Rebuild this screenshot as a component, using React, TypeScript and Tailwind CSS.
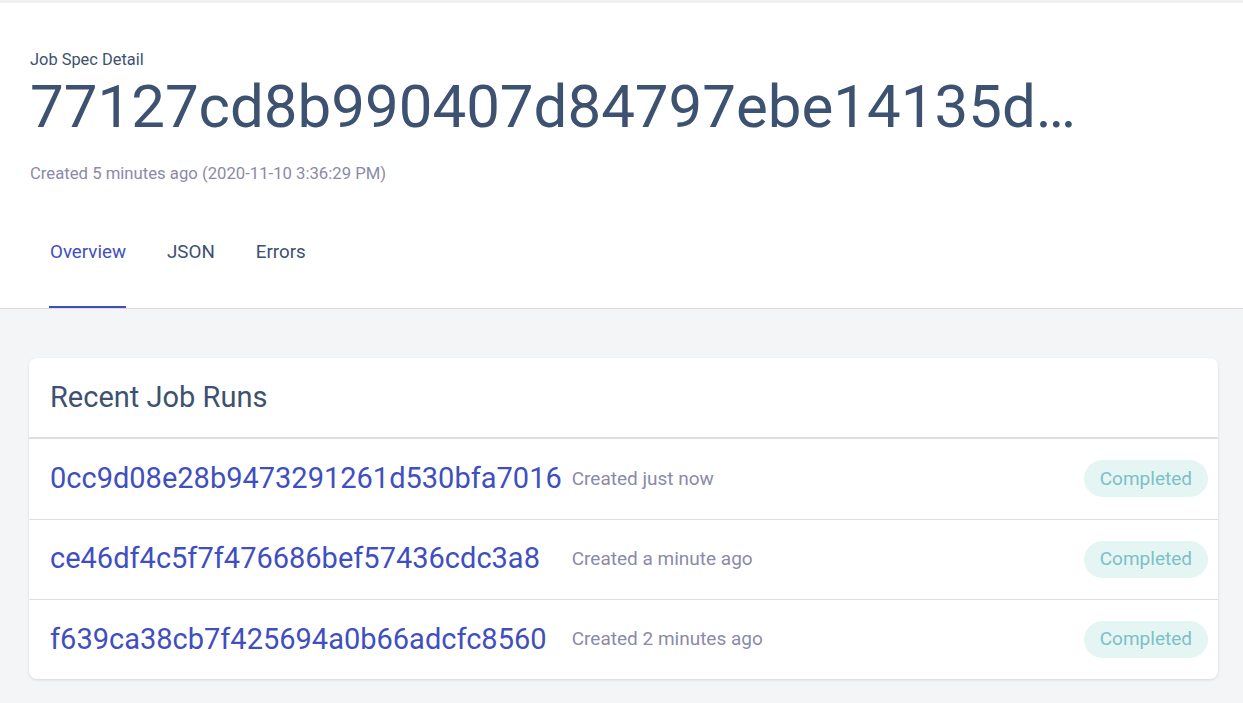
import React from "react";

const runs = [
  { id: "0cc9d08e28b9473291261d530bfa7016", created: "Created just now" },
  { id: "ce46df4c5f7f476686bef57436cdc3a8", created: "Created a minute ago" },
  { id: "f639ca38cb7f425694a0b66adcfc8560", created: "Created 2 minutes ago" },
];

export default function App() {
  return (
    <div
      className="min-h-[703px] w-full bg-[#f4f5f7]"
      style={{ fontFamily: "Roboto, 'Liberation Sans', sans-serif" }}
    >
      <div className="h-[3px] bg-[#f0f1f3]" />
      <div className="bg-white border-b border-[#dcdcdc]">
        <div className="pl-[30px] pt-[45px]">
          <div className="text-[16.4px] leading-[24px] text-[#3d5170]">Job Spec Detail</div>
          <div className="text-[60px] leading-[72px] text-[#3d5170] -mt-[1px]">
            77127cd8b990407d84797ebe14135d…
          </div>
          <div className="mt-[19px] text-[16.7px] leading-[24px] text-[#8b8aa8]">
            Created 5 minutes ago (2020-11-10 3:36:29 PM)
          </div>
        </div>
        <div className="flex pl-[21px] mt-[44px]">
          <div className="relative px-[29px] pt-[10px] h-[78px] text-[18.75px] leading-[24px] text-[#3f4fc0]">
            Overview
            <div className="absolute left-[28px] right-[29px] bottom-0 h-[2px] bg-[#3f4fc0]" />
          </div>
          <div className="px-[12px] pt-[10px] text-[18.75px] leading-[24px] text-[#3d5170]">JSON</div>
          <div className="pl-[29px] pt-[10px] text-[18.75px] leading-[24px] text-[#3d5170]">Errors</div>
        </div>
      </div>
      <div className="px-[29px] pt-[49px] pr-[25px]">
        <div className="bg-white rounded-[8px] shadow-[0_1px_3px_rgba(0,0,0,0.12)] overflow-hidden">
          <div className="h-[81px] flex items-center pl-[21px] text-[29px] text-[#3d5170] border-b-2 border-[#e2dede]">
            Recent Job Runs
          </div>
          <table className="w-full border-collapse">
            <tbody>
              {runs.map((r, i) => (
                <tr key={r.id} className={i < runs.length - 1 ? "border-b border-[#e2dcdc]" : ""}>
                  <td className="h-[80px] pl-[21px] pr-[10px] whitespace-nowrap w-[1px] text-[29px] text-[#3f4fc0]">
                    {r.id}
                  </td>
                  <td className="text-[19px] text-[#8b8aa8] whitespace-nowrap">{r.created}</td>
                  <td className="pr-[10px] text-right">
                    <span className="inline-flex items-center h-[37px] px-[16px] rounded-full bg-[#e5f5f3] text-[19px] text-[#7cc0c8]">
                      Completed
                    </span>
                  </td>
                </tr>
              ))}
            </tbody>
          </table>
        </div>
      </div>
    </div>
  );
}
